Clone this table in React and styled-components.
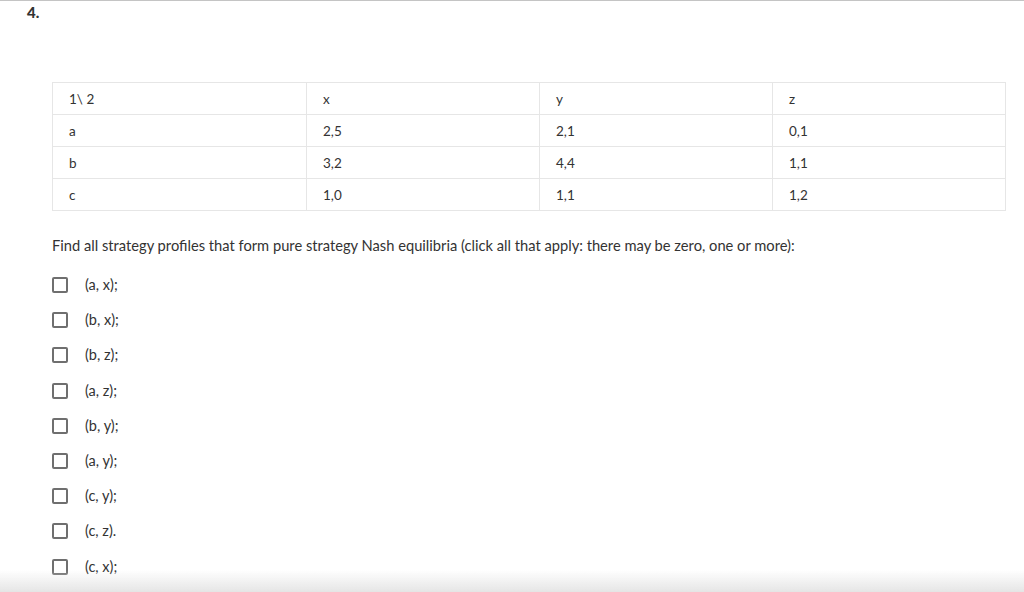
import React from 'react';
import styled, { createGlobalStyle } from 'styled-components';

const GlobalStyle = createGlobalStyle`
  html, body {
    margin: 0;
    padding: 0;
    background: #fff;
  }
  body {
    font-family: Lato, "Liberation Sans", sans-serif;
    color: #333;
  }
`;

const Page = styled.div`
  border-top: 1px solid #c4c4c4;
  min-height: 591px;
`;

const Number = styled.div`
  font-weight: 900;
  font-size: 15px;
  line-height: 16px;
  color: #333;
  padding: 3px 0 0 27px;
`;

const Body = styled.div`
  padding: 62px 19px 0 52px;
`;

const Grid = styled.table`
  width: 953px;
  border-collapse: collapse;
  table-layout: fixed;
  font-size: 13.5px;
  color: #333;
`;

const Cell = styled.td`
  border: 1px solid #e6e6e6;
  height: 32px;
  padding: 1px 16px 0;
  line-height: 16px;
  box-sizing: border-box;
`;

const Question = styled.p`
  margin: 25px 0 23px;
  font-size: 14.7px;
  line-height: 18px;
  color: #333;
`;

const Options = styled.ul`
  list-style: none;
  margin: 0;
  padding: 0;
  display: flex;
  flex-direction: column;
  gap: 19.2px;
`;

const Option = styled.li`
  display: flex;
  align-items: center;
  gap: 17px;
  font-size: 14.5px;
  line-height: 16px;
  color: #333;
`;

const Box = styled.span`
  width: 16px;
  height: 16px;
  box-sizing: border-box;
  border: 2px solid #6f6f6f;
  border-radius: 2px;
  flex: none;
`;

const Fade = styled.div`
  position: fixed;
  left: 0;
  right: 0;
  bottom: 0;
  height: 22px;
  background: linear-gradient(to bottom, rgba(235, 235, 235, 0), rgba(226, 226, 226, 0.9));
  pointer-events: none;
`;

const header = ['1\\ 2', 'x', 'y', 'z'];
const rows = [
  ['a', '2,5', '2,1', '0,1'],
  ['b', '3,2', '4,4', '1,1'],
  ['c', '1,0', '1,1', '1,2'],
];
const widths = [254, 233, 233, 233];
const choices = ['(a, x);', '(b, x);', '(b, z);', '(a, z);', '(b, y);', '(a, y);', '(c, y);', '(c, z).', '(c, x);'];

export default function App() {
  return (
    <Page>
      <GlobalStyle />
      <Number>4.</Number>
      <Body>
        <Grid>
          <colgroup>
            {widths.map((w, i) => (
              <col key={i} style={{ width: w }} />
            ))}
          </colgroup>
          <tbody>
            <tr>
              {header.map((h, i) => (
                <Cell key={i}>{h}</Cell>
              ))}
            </tr>
            {rows.map((r, ri) => (
              <tr key={ri}>
                {r.map((c, ci) => (
                  <Cell key={ci}>{c}</Cell>
                ))}
              </tr>
            ))}
          </tbody>
        </Grid>
        <Question>
          Find all strategy profiles that form pure strategy Nash equilibria (click all that apply: there may be zero, one or more):
        </Question>
        <Options>
          {choices.map((c) => (
            <Option key={c}>
              <Box />
              {c}
            </Option>
          ))}
        </Options>
      </Body>
      <Fade />
    </Page>
  );
}
